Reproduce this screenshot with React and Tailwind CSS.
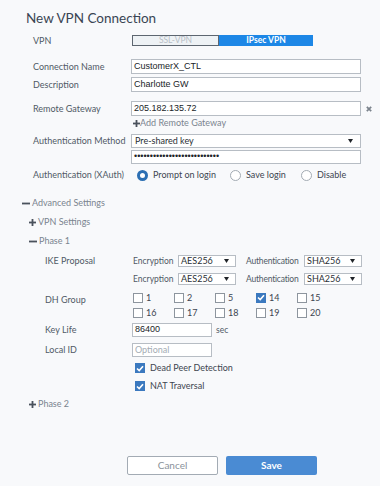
import React from 'react';

const Check = () => (
    <svg width="8" height="7" viewBox="0 0 8 7" className="block">
        <polyline points="1,3.5 3.2,5.6 7,1.2" fill="none" stroke="#ffffff" strokeWidth="1.6" />
    </svg>
);

const Box = ({ checked }) =>
    checked ? (
        <span className="w-[10px] h-[10px] bg-[#3b79bf] flex items-center justify-center shrink-0">
            <Check />
        </span>
    ) : (
        <span className="w-[10px] h-[10px] border border-[#8d959e] bg-white shrink-0" />
    );

const Plus = () => (
    <svg width="7" height="7" viewBox="0 0 7 7" className="shrink-0">
        <rect x="2.6" y="0" width="1.8" height="7" fill="#4a525c" />
        <rect x="0" y="2.6" width="7" height="1.8" fill="#4a525c" />
    </svg>
);

const Minus = () => (
    <svg width="8" height="7" viewBox="0 0 8 7" className="shrink-0">
        <rect x="0" y="2.6" width="8" height="1.8" fill="#4a525c" />
    </svg>
);

const Arrow = () => (
    <svg width="5" height="4" viewBox="0 0 5 4" className="shrink-0">
        <polygon points="0,0 5,0 2.5,4" fill="#1f2328" />
    </svg>
);

const Radio = ({ on }) =>
    on ? (
        <span className="w-[11px] h-[11px] rounded-full border-[3px] border-[#2c6fb3] bg-white shrink-0" />
    ) : (
        <span className="w-[11px] h-[11px] rounded-full border border-[#a3abb3] bg-white shrink-0" />
    );

const TextBox = ({ children, className = '' }) => (
    <div className={`h-full bg-white border border-[#b7bdc4] flex items-center px-[2px] font-['Liberation_Sans',Arial,sans-serif] text-[9px] text-[#202428] whitespace-nowrap overflow-hidden ${className}`}>
        {children}
    </div>
);

const MiniSelect = ({ value }) => (
    <div className="w-[58px] h-full bg-white border border-[#b7bdc4] flex items-center justify-between pl-[2px] pr-[6px] text-[9px] text-[#2a2f35]">
        <span>{value}</span>
        <Arrow />
    </div>
);

const Proposal = () => (
    <>
        <span className="w-[45px] text-[8.5px]">Encryption</span>
        <MiniSelect value="AES256" />
        <span className="ml-[10px] w-[58px] text-[8.5px] tracking-[-0.2px]">Authentication</span>
        <MiniSelect value="SHA256" />
    </>
);

export default function App() {
    const dh = [
        [['1', false], ['2', false], ['5', false], ['14', true], ['15', false]],
        [['16', false], ['17', false], ['18', false], ['19', false], ['20', false]],
    ];

    return (
        <div className="w-[380px] h-[486px] bg-[#f8f9fb] font-['Lato','Noto_Sans',sans-serif] text-[#505a66] text-[9px] whitespace-nowrap overflow-hidden">
            <h1 className="pl-[26px] pt-[8px] h-[28px] text-[13.5px] leading-[20px] text-[#3a4553]">New VPN Connection</h1>

            {/* VPN type */}
            <div className="mt-[7px] h-[11px] flex items-center pl-[33px]">
                <span className="w-[99px]">VPN</span>
                <div className="flex h-full">
                    <div className="w-[87px] h-full border border-[#5d6670] bg-[#eef2f5] flex items-center justify-center text-[8.5px] text-[#b8bfc6]">SSL-VPN</div>
                    <div className="w-[94px] h-full bg-[#1d87e6] flex items-center justify-center text-[8.5px] font-bold text-white">IPsec VPN</div>
                </div>
            </div>

            {/* Basic fields */}
            <div className="mt-[13px] h-[15px] flex items-center pl-[33px]">
                <span className="w-[98px]">Connection Name</span>
                <TextBox className="w-[230px]">CustomerX_CTL</TextBox>
            </div>
            <div className="mt-[3px] h-[15px] flex items-center pl-[33px]">
                <span className="w-[98px]">Description</span>
                <TextBox className="w-[230px]">Charlotte GW</TextBox>
            </div>
            <div className="mt-[9px] h-[15px] flex items-center pl-[33px]">
                <span className="w-[98px]">Remote Gateway</span>
                <TextBox className="w-[230px]">205.182.135.72</TextBox>
                <svg width="6" height="6" viewBox="0 0 6 6" className="ml-[5px]">
                    <path d="M0.8 0.8 L5.2 5.2 M5.2 0.8 L0.8 5.2" stroke="#7b838c" strokeWidth="1.7" />
                </svg>
            </div>
            <div className="mt-[1px] h-[12px] flex items-center pl-[133px] text-[#7a848f]">
                <Plus />
                <span>Add Remote Gateway</span>
            </div>

            <div className="mt-[5px] h-[14px] flex items-center pl-[33px]">
                <span className="w-[98px]">Authentication Method</span>
                <div className="w-[230px] h-full bg-white border border-[#b7bdc4] flex items-center justify-between pl-[3px] pr-[7px] text-[#2a2f35]">
                    <span>Pre-shared key</span>
                    <Arrow />
                </div>
            </div>
            <div className="mt-[2px] h-[14px] flex items-center pl-[131px]">
                <TextBox className="w-[230px] text-[8px]">•••••••••••••••••••••••••••</TextBox>
            </div>

            <div className="mt-[4px] h-[14px] flex items-center pl-[33px]">
                <span className="w-[104px]">Authentication (XAuth)</span>
                <Radio on />
                <span className="ml-[5px] w-[77px] text-[#3d4550]">Prompt on login</span>
                <Radio />
                <span className="ml-[5px] w-[55px] text-[#3d4550]">Save login</span>
                <Radio />
                <span className="ml-[5px] text-[#3d4550]">Disable</span>
            </div>

            {/* Advanced */}
            <div className="mt-[15px] h-[12px] flex items-center pl-[22px] gap-[2px] text-[#7a848f]">
                <Minus />
                <span>Advanced Settings</span>
            </div>
            <div className="mt-[7px] h-[12px] flex items-center pl-[29px] gap-[2px] text-[#7a848f]">
                <Plus />
                <span>VPN Settings</span>
            </div>
            <div className="mt-[7px] h-[12px] flex items-center pl-[29px] gap-[2px] text-[#7a848f]">
                <Minus />
                <span>Phase 1</span>
            </div>

            {/* Phase 1 */}
            <div className="mt-[8px] h-[12px] flex items-center pl-[45px]">
                <span className="w-[88px]">IKE Proposal</span>
                <Proposal />
            </div>
            <div className="mt-[6px] h-[12px] flex items-center pl-[133px]">
                <Proposal />
            </div>

            <div className="mt-[6px] flex pl-[45px]">
                <span className="w-[88px] h-[13px] flex items-center mt-[2px]">DH Group</span>
                <div className="flex flex-col gap-[2px]">
                    {dh.map((row, i) => (
                        <div key={i} className="h-[13px] flex items-center">
                            {row.map(([n, c]) => (
                                <div key={n} className="w-[41px] flex items-center gap-[3px] text-[#3d4550]">
                                    <Box checked={c} />
                                    <span>{n}</span>
                                </div>
                            ))}
                        </div>
                    ))}
                </div>
            </div>

            <div className="mt-[4px] h-[14px] flex items-center pl-[45px]">
                <span className="w-[87px]">Key Life</span>
                <TextBox className="w-[80px]">86400</TextBox>
                <span className="ml-[4px] text-[8.5px]">sec</span>
            </div>
            <div className="mt-[6px] h-[14px] flex items-center pl-[45px]">
                <span className="w-[87px]">Local ID</span>
                <div className="w-[80px] h-full bg-white border border-[#b7bdc4] flex items-center px-[2px] text-[#a4acb4]">Optional</div>
            </div>

            <div className="mt-[5px] h-[12px] flex items-center pl-[135px] gap-[5px] text-[#3d4550]">
                <Box checked />
                <span>Dead Peer Detection</span>
            </div>
            <div className="mt-[6px] h-[12px] flex items-center pl-[135px] gap-[5px] text-[#3d4550]">
                <Box checked />
                <span>NAT Traversal</span>
            </div>

            <div className="mt-[6px] h-[12px] flex items-center pl-[29px] gap-[2px] text-[#7a848f]">
                <Plus />
                <span>Phase 2</span>
            </div>

            {/* Actions */}
            <div className="mt-[46px] h-[19px] flex pl-[127px] gap-[8px]">
                <button className="w-[91px] h-full bg-white border border-[#a3abb4] rounded-[2px] text-[10px] text-[#8a929b]">Cancel</button>
                <button className="w-[91px] h-full bg-[#4a8bd3] rounded-[2px] text-[10px] font-bold text-white">Save</button>
            </div>
        </div>
    );
}
